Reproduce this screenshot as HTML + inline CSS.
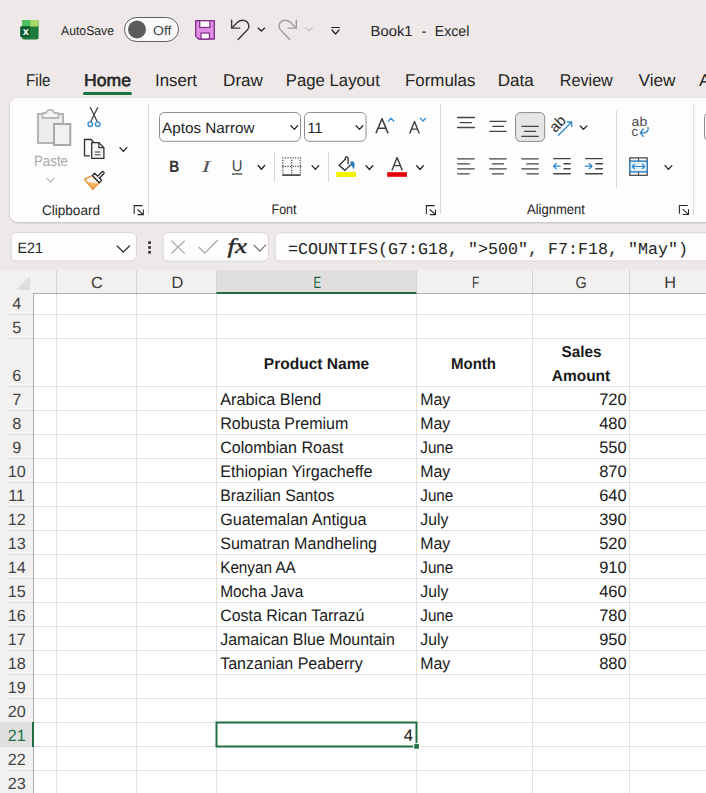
<!DOCTYPE html><html><head><meta charset="utf-8"><style>html,body{margin:0;padding:0;width:706px;height:793px;overflow:hidden;background:#eee9e8}svg{display:block}</style></head><body><svg width="706" height="793" viewBox="0 0 706 793" text-rendering="geometricPrecision"><rect x="0" y="0" width="706" height="793" rx="0" fill="#eee9e8" stroke="none" stroke-width="1"/>
<g>
<rect x="22" y="20" width="16.6" height="19.6" rx="2" fill="#1d7a3a" stroke="none" stroke-width="1"/>
<path d="M24 20 H30.2 V26.6 H22 V22 A2 2 0 0 1 24 20Z" fill="#4cc162"/>
<path d="M30.2 20 H36.6 A2 2 0 0 1 38.6 22 V26.6 H30.2Z" fill="#a6db6b"/>
<rect x="20.2" y="26.2" width="9.6" height="11" rx="1.2" fill="#0f5a2c" stroke="none" stroke-width="1"/>
<text x="25.9" y="35.3" font-family="Liberation Sans" font-size="11" fill="#ffffff" font-weight="700" font-style="normal" text-anchor="middle">x</text>
</g>
<text x="61" y="35.4" font-family="Liberation Sans" font-size="12.8" fill="#242424" font-weight="400" font-style="normal" text-anchor="start" textLength="53" lengthAdjust="spacingAndGlyphs">AutoSave</text>
<rect x="124.5" y="17.5" width="54" height="24" rx="12" fill="#fbfafa" stroke="#5f5f5f" stroke-width="1"/>
<circle cx="137" cy="29.5" r="9" fill="#5c5c5c"/>
<text x="153" y="35" font-family="Liberation Sans" font-size="13" fill="#424242" font-weight="400" font-style="normal" text-anchor="start" textLength="18.5" lengthAdjust="spacingAndGlyphs">Off</text>
<path d="M195.7 20.7 H214.3 V39 H198.6 L195.7 36.1 Z" fill="#e08fe4" stroke="#7f2a88" stroke-width="1.3" stroke-linejoin="round"/>
<rect x="199.7" y="20.7" width="10.2" height="6.8" rx="0" fill="#fdf6fd" stroke="#7f2a88" stroke-width="1.2"/>
<rect x="201" y="33" width="8.4" height="6" rx="0" fill="#fdf6fd" stroke="#7f2a88" stroke-width="1.2"/>
<path d="M231.6 20.2 V28.1 H239.7" fill="none" stroke="#383838" stroke-width="1.4" stroke-linecap="round" stroke-linejoin="round"/>
<path d="M231.9 27.9 L237.3 22.5 C240.3 19.5 245.5 19.5 247.6 22.5 C249.2 24.8 249 28.2 246.8 30.6 L238.1 39.4" fill="none" stroke="#383838" stroke-width="1.4" stroke-linecap="round" stroke-linejoin="round"/>
<path d="M258.09999999999997 28.1 L261.4 31.1 L264.7 28.1" fill="none" stroke="#242424" stroke-width="1.3" stroke-linecap="round" stroke-linejoin="round"/>
<path d="M296.30 20.20 V28.10 H288.20" fill="none" stroke="#9c9c9c" stroke-width="1.4" stroke-linecap="round" stroke-linejoin="round"/>
<path d="M296.00 27.90 L290.60 22.50 C287.60 19.50 282.40 19.50 280.30 22.50 C278.70 24.80 278.90 28.20 281.10 30.60 L289.80 39.40" fill="none" stroke="#9c9c9c" stroke-width="1.4" stroke-linecap="round" stroke-linejoin="round"/>
<path d="M305.7 27.9 L309 30.9 L312.3 27.9" fill="none" stroke="#b8b8b8" stroke-width="1.1" stroke-linecap="round" stroke-linejoin="round"/>
<line x1="331.2" y1="27.5" x2="339.8" y2="27.5" stroke="#242424" stroke-width="1"/>
<path d="M332.0 30.0 L335.5 34.0 L339.0 30.0" fill="none" stroke="#242424" stroke-width="1.3" stroke-linecap="round" stroke-linejoin="round"/>
<text x="370.6" y="35.7" font-family="Liberation Sans" font-size="14.6" fill="#242424" font-weight="400" font-style="normal" text-anchor="start" textLength="42" lengthAdjust="spacingAndGlyphs">Book1</text>
<text x="421.5" y="35.7" font-family="Liberation Sans" font-size="14.6" fill="#242424" font-weight="400" font-style="normal" text-anchor="start" textLength="5" lengthAdjust="spacingAndGlyphs">-</text>
<text x="434.8" y="35.7" font-family="Liberation Sans" font-size="14.6" fill="#242424" font-weight="400" font-style="normal" text-anchor="start" textLength="34.5" lengthAdjust="spacingAndGlyphs">Excel</text>
<text x="26" y="85.8" font-family="Liberation Sans" font-size="17" fill="#242424" font-weight="400" font-style="normal" text-anchor="start" textLength="24.5" lengthAdjust="spacingAndGlyphs">File</text>
<text x="84" y="85.8" font-family="Liberation Sans" font-size="17" fill="#242424" font-weight="400" font-style="normal" text-anchor="start" textLength="47" lengthAdjust="spacingAndGlyphs" stroke="#242424" stroke-width="0.55">Home</text>
<text x="155" y="85.8" font-family="Liberation Sans" font-size="17" fill="#242424" font-weight="400" font-style="normal" text-anchor="start" textLength="42" lengthAdjust="spacingAndGlyphs">Insert</text>
<text x="223" y="85.8" font-family="Liberation Sans" font-size="17" fill="#242424" font-weight="400" font-style="normal" text-anchor="start" textLength="40" lengthAdjust="spacingAndGlyphs">Draw</text>
<text x="285.8" y="85.8" font-family="Liberation Sans" font-size="17" fill="#242424" font-weight="400" font-style="normal" text-anchor="start" textLength="94" lengthAdjust="spacingAndGlyphs">Page Layout</text>
<text x="405" y="85.8" font-family="Liberation Sans" font-size="17" fill="#242424" font-weight="400" font-style="normal" text-anchor="start" textLength="70.5" lengthAdjust="spacingAndGlyphs">Formulas</text>
<text x="497.8" y="85.8" font-family="Liberation Sans" font-size="17" fill="#242424" font-weight="400" font-style="normal" text-anchor="start" textLength="36" lengthAdjust="spacingAndGlyphs">Data</text>
<text x="559.8" y="85.8" font-family="Liberation Sans" font-size="17" fill="#242424" font-weight="400" font-style="normal" text-anchor="start" textLength="53" lengthAdjust="spacingAndGlyphs">Review</text>
<text x="638.5" y="85.8" font-family="Liberation Sans" font-size="17" fill="#242424" font-weight="400" font-style="normal" text-anchor="start" textLength="37" lengthAdjust="spacingAndGlyphs">View</text>
<text x="699" y="85.8" font-family="Liberation Sans" font-size="17" fill="#242424" font-weight="400" font-style="normal" text-anchor="start" textLength="12" lengthAdjust="spacingAndGlyphs">A</text>
<rect x="83" y="92" width="49" height="3" rx="1.5" fill="#1b7343" stroke="none" stroke-width="1"/>
<filter id="sh" x="-5%" y="-20%" width="110%" height="140%"><feDropShadow dx="0" dy="0.8" stdDeviation="1" flood-color="#000" flood-opacity="0.22"/></filter>
<rect x="10" y="98" width="720" height="124" rx="8" fill="#fdfdfd" stroke="none" stroke-width="1" filter="url(#sh)"/>
<path d="M38 114 H63 V143 H38 Z" fill="#ededed" stroke="#b4b4b4" stroke-width="2"/>
<path d="M42.5 113 H46.2 A4.1 4.1 0 0 1 54.2 113 H58.5 V118 H42.5 Z" fill="#f4f4f4" stroke="#b8b8b8" stroke-width="1.8" stroke-linejoin="round"/>
<path d="M54 124 H70.3 V145 H54 Z" fill="#f1f1f1" stroke="#a8a8a8" stroke-width="2"/>
<text x="34" y="166" font-family="Liberation Sans" font-size="15" fill="#a8a8a8" font-weight="400" font-style="normal" text-anchor="start" textLength="34" lengthAdjust="spacingAndGlyphs">Paste</text>
<path d="M46.75 178.1 L50.5 181.9 L54.25 178.1" fill="none" stroke="#b0b0b0" stroke-width="1.1" stroke-linecap="round" stroke-linejoin="round"/>
<path d="M90.3 107.6 L97.2 121.6 M97.7 107.6 L90.8 121.6" fill="none" stroke="#3a3a3a" stroke-width="1.2" stroke-linecap="round"/>
<circle cx="90.3" cy="124.2" r="2.3" fill="#fff" stroke="#3a8fd6" stroke-width="1.4"/>
<circle cx="97.7" cy="124.2" r="2.3" fill="#fff" stroke="#3a8fd6" stroke-width="1.4"/>
<path d="M89.8 155.8 H84.5 V139.5 H91 L93.5 142" fill="#fafafa" stroke="#2e2e2e" stroke-width="1.3" stroke-linejoin="round"/>
<path d="M91.7 142.6 H98.9 L103.9 147.6 V158.4 H91.7 Z" fill="#f7f7f7" stroke="#2e2e2e" stroke-width="1.3" stroke-linejoin="round"/>
<path d="M98.9 142.6 V147.6 H103.9" fill="none" stroke="#2e2e2e" stroke-width="1.2"/>
<line x1="94.8" y1="152" x2="100.5" y2="152" stroke="#555" stroke-width="1.2"/>
<line x1="94.8" y1="154.8" x2="100.5" y2="154.8" stroke="#555" stroke-width="1.2"/>
<path d="M120.0 147.6 L123.4 151.4 L126.80000000000001 147.6" fill="none" stroke="#242424" stroke-width="1.3" stroke-linecap="round" stroke-linejoin="round"/>
<path d="M84.6 179.4 C87.5 177.6 90 176.5 92.4 175.5 L99.3 182.7 L92.6 189.2 Z" fill="#fff7ec" stroke="#e3861c" stroke-width="1.3" stroke-linejoin="round"/>
<path d="M87.2 182 L92.5 188.2 L98.3 183.8 Z" fill="#f6b35a"/>
<path d="M92.4 175.5 L94.6 173.3 L101.6 180.3 L99.3 182.7 Z" fill="#fff" stroke="#262626" stroke-width="1.3" stroke-linejoin="round"/>
<path d="M97.5 176.4 L102.1 171.7 A1.3 1.3 0 0 1 103.9 173.5 L99.3 178.2" fill="#fff" stroke="#262626" stroke-width="1.3" stroke-linejoin="round"/>
<text x="42" y="214.7" font-family="Liberation Sans" font-size="14" fill="#242424" font-weight="400" font-style="normal" text-anchor="start" textLength="58" lengthAdjust="spacingAndGlyphs">Clipboard</text>
<path d="M134.2 213.9 V205.6 H142.5" fill="none" stroke="#242424" stroke-width="1.05"/>
<path d="M137.6 209.5 L143.29999999999998 214.6 M143.29999999999998 209.5 V214.6 H137.6" fill="none" stroke="#242424" stroke-width="1.05"/>
<line x1="148.5" y1="104" x2="148.5" y2="214" stroke="#d6d6d6" stroke-width="1"/>
<rect x="159.5" y="112.5" width="141" height="28.8" rx="5" fill="#ffffff" stroke="#8d8d8d" stroke-width="1"/>
<text x="162" y="133.4" font-family="Liberation Sans" font-size="15" fill="#242424" font-weight="400" font-style="normal" text-anchor="start" textLength="92.5" lengthAdjust="spacingAndGlyphs">Aptos Narrow</text>
<path d="M291.0 125.8 L294.3 129.4 L297.6 125.8" fill="none" stroke="#242424" stroke-width="1.3" stroke-linecap="round" stroke-linejoin="round"/>
<rect x="304.5" y="112.5" width="61.5" height="28.8" rx="5" fill="#ffffff" stroke="#8d8d8d" stroke-width="1"/>
<text x="307.5" y="133.4" font-family="Liberation Sans" font-size="15" fill="#242424" font-weight="400" font-style="normal" text-anchor="start" textLength="15" lengthAdjust="spacingAndGlyphs">11</text>
<path d="M356.2 125.8 L359.5 129.4 L362.8 125.8" fill="none" stroke="#242424" stroke-width="1.3" stroke-linecap="round" stroke-linejoin="round"/>
<path d="M375.9 133.4 L382 118.6 L388.1 133.4 M378.1 128.2 H385.9" fill="none" stroke="#3c3c3c" stroke-width="1.45" stroke-linejoin="round"/>
<path d="M388.3 121 L391 118.2 L393.7 121" fill="none" stroke="#3a8fd6" stroke-width="1.3" stroke-linecap="round" stroke-linejoin="round"/>
<path d="M409.7 133.4 L414.5 121.4 L419.3 133.4 M411.5 129.1 H417.5" fill="none" stroke="#3c3c3c" stroke-width="1.4" stroke-linejoin="round"/>
<path d="M420.3 118.2 L423 121 L425.7 118.2" fill="none" stroke="#3a8fd6" stroke-width="1.3" stroke-linecap="round" stroke-linejoin="round"/>
<text x="169.2" y="171.8" font-family="Liberation Sans" font-size="16.3" fill="#333" font-weight="700" font-style="normal" text-anchor="start" textLength="10" lengthAdjust="spacingAndGlyphs">B</text>
<text x="201.8" y="171.8" font-family="Liberation Serif" font-size="16.3" fill="#555" font-weight="400" font-style="italic" text-anchor="start" textLength="8.5" lengthAdjust="spacingAndGlyphs">I</text>
<text x="231.8" y="171" font-family="Liberation Sans" font-size="15.5" fill="#444" font-weight="400" font-style="normal" text-anchor="start" textLength="10.7" lengthAdjust="spacingAndGlyphs">U</text>
<line x1="232" y1="174" x2="242.3" y2="174" stroke="#444" stroke-width="1.3"/>
<path d="M258.09999999999997 165.5 L261.4 169.3 L264.7 165.5" fill="none" stroke="#242424" stroke-width="1.3" stroke-linecap="round" stroke-linejoin="round"/>
<line x1="274.5" y1="152" x2="274.5" y2="182" stroke="#d6d6d6" stroke-width="1"/>
<rect x="282.3" y="157.3" width="1.15" height="1.15" rx="0" fill="#333333" stroke="none" stroke-width="1"/>
<rect x="282.3" y="165.8" width="1.15" height="1.15" rx="0" fill="#333333" stroke="none" stroke-width="1"/>
<rect x="284.85" y="157.3" width="1.15" height="1.15" rx="0" fill="#333333" stroke="none" stroke-width="1"/>
<rect x="284.85" y="165.8" width="1.15" height="1.15" rx="0" fill="#333333" stroke="none" stroke-width="1"/>
<rect x="287.40000000000003" y="157.3" width="1.15" height="1.15" rx="0" fill="#333333" stroke="none" stroke-width="1"/>
<rect x="287.40000000000003" y="165.8" width="1.15" height="1.15" rx="0" fill="#333333" stroke="none" stroke-width="1"/>
<rect x="289.95" y="157.3" width="1.15" height="1.15" rx="0" fill="#333333" stroke="none" stroke-width="1"/>
<rect x="289.95" y="165.8" width="1.15" height="1.15" rx="0" fill="#333333" stroke="none" stroke-width="1"/>
<rect x="292.5" y="157.3" width="1.15" height="1.15" rx="0" fill="#333333" stroke="none" stroke-width="1"/>
<rect x="292.5" y="165.8" width="1.15" height="1.15" rx="0" fill="#333333" stroke="none" stroke-width="1"/>
<rect x="295.05" y="157.3" width="1.15" height="1.15" rx="0" fill="#333333" stroke="none" stroke-width="1"/>
<rect x="295.05" y="165.8" width="1.15" height="1.15" rx="0" fill="#333333" stroke="none" stroke-width="1"/>
<rect x="297.6" y="157.3" width="1.15" height="1.15" rx="0" fill="#333333" stroke="none" stroke-width="1"/>
<rect x="297.6" y="165.8" width="1.15" height="1.15" rx="0" fill="#333333" stroke="none" stroke-width="1"/>
<rect x="300.15000000000003" y="157.3" width="1.15" height="1.15" rx="0" fill="#333333" stroke="none" stroke-width="1"/>
<rect x="300.15000000000003" y="165.8" width="1.15" height="1.15" rx="0" fill="#333333" stroke="none" stroke-width="1"/>
<rect x="282.3" y="159.8" width="1.15" height="1.15" rx="0" fill="#333333" stroke="none" stroke-width="1"/>
<rect x="291.2" y="159.8" width="1.15" height="1.15" rx="0" fill="#333333" stroke="none" stroke-width="1"/>
<rect x="299.6" y="159.8" width="1.15" height="1.15" rx="0" fill="#333333" stroke="none" stroke-width="1"/>
<rect x="282.3" y="162.3" width="1.15" height="1.15" rx="0" fill="#333333" stroke="none" stroke-width="1"/>
<rect x="291.2" y="162.3" width="1.15" height="1.15" rx="0" fill="#333333" stroke="none" stroke-width="1"/>
<rect x="299.6" y="162.3" width="1.15" height="1.15" rx="0" fill="#333333" stroke="none" stroke-width="1"/>
<rect x="282.3" y="164.8" width="1.15" height="1.15" rx="0" fill="#333333" stroke="none" stroke-width="1"/>
<rect x="291.2" y="164.8" width="1.15" height="1.15" rx="0" fill="#333333" stroke="none" stroke-width="1"/>
<rect x="299.6" y="164.8" width="1.15" height="1.15" rx="0" fill="#333333" stroke="none" stroke-width="1"/>
<rect x="282.3" y="167.3" width="1.15" height="1.15" rx="0" fill="#333333" stroke="none" stroke-width="1"/>
<rect x="291.2" y="167.3" width="1.15" height="1.15" rx="0" fill="#333333" stroke="none" stroke-width="1"/>
<rect x="299.6" y="167.3" width="1.15" height="1.15" rx="0" fill="#333333" stroke="none" stroke-width="1"/>
<rect x="282.3" y="169.8" width="1.15" height="1.15" rx="0" fill="#333333" stroke="none" stroke-width="1"/>
<rect x="291.2" y="169.8" width="1.15" height="1.15" rx="0" fill="#333333" stroke="none" stroke-width="1"/>
<rect x="299.6" y="169.8" width="1.15" height="1.15" rx="0" fill="#333333" stroke="none" stroke-width="1"/>
<rect x="282.3" y="172.3" width="1.15" height="1.15" rx="0" fill="#333333" stroke="none" stroke-width="1"/>
<rect x="291.2" y="172.3" width="1.15" height="1.15" rx="0" fill="#333333" stroke="none" stroke-width="1"/>
<rect x="299.6" y="172.3" width="1.15" height="1.15" rx="0" fill="#333333" stroke="none" stroke-width="1"/>
<rect x="282.2" y="174.3" width="18.5" height="1.6" rx="0" fill="#3a3a3a" stroke="none" stroke-width="1"/>
<path d="M312.09999999999997 165.6 L315.4 169.4 L318.7 165.6" fill="none" stroke="#242424" stroke-width="1.3" stroke-linecap="round" stroke-linejoin="round"/>
<line x1="328.5" y1="152" x2="328.5" y2="182" stroke="#d6d6d6" stroke-width="1"/>
<path d="M350.8 164.6 L344.9 170.4 L339.2 165.2 L345.2 159.4" fill="#fff" stroke="#262626" stroke-width="1.3" stroke-linejoin="round"/>
<path d="M345.2 159.6 V158.4 C345.2 156.4 348.1 156.4 348.1 158.4 V163.8" fill="none" stroke="#262626" stroke-width="1.3" stroke-linecap="round"/>
<path d="M350.3 162.6 C351.3 160.7 354.1 160.8 354.5 163.6 C354.8 165.6 354.3 168 353.6 169.4 C353 167.6 351.9 166 350.9 165 Z" fill="#2a7bbf"/>
<rect x="336.2" y="171.9" width="19.8" height="5.1" rx="0" fill="#f5f200" stroke="none" stroke-width="1"/>
<path d="M366.09999999999997 165.7 L369.4 169.5 L372.7 165.7" fill="none" stroke="#242424" stroke-width="1.3" stroke-linecap="round" stroke-linejoin="round"/>
<path d="M391.9 170.6 L397.1 157.6 L402.3 170.6 M393.9 165.6 H400.3" fill="none" stroke="#3a3a3a" stroke-width="1.4" stroke-linejoin="round"/>
<rect x="387.2" y="172.2" width="19.8" height="4.6" rx="0" fill="#e5000b" stroke="none" stroke-width="1"/>
<path d="M416.7 165.7 L420 169.5 L423.3 165.7" fill="none" stroke="#242424" stroke-width="1.3" stroke-linecap="round" stroke-linejoin="round"/>
<text x="271.5" y="214" font-family="Liberation Sans" font-size="14" fill="#242424" font-weight="400" font-style="normal" text-anchor="start" textLength="25" lengthAdjust="spacingAndGlyphs">Font</text>
<path d="M426.4 213.9 V205.6 H434.7" fill="none" stroke="#242424" stroke-width="1.05"/>
<path d="M429.79999999999995 209.5 L435.5 214.6 M435.5 209.5 V214.6 H429.79999999999995" fill="none" stroke="#242424" stroke-width="1.05"/>
<line x1="440.5" y1="104" x2="440.5" y2="214" stroke="#d6d6d6" stroke-width="1"/>
<line x1="457.6" y1="117.5" x2="474.4" y2="117.5" stroke="#444" stroke-width="1.35" stroke-linecap="round"/>
<line x1="460.3" y1="122.6" x2="471.4" y2="122.6" stroke="#444" stroke-width="1.35" stroke-linecap="round"/>
<line x1="457.6" y1="127.5" x2="474.4" y2="127.5" stroke="#444" stroke-width="1.35" stroke-linecap="round"/>
<line x1="489.90000000000003" y1="121.3" x2="506.09999999999997" y2="121.3" stroke="#444" stroke-width="1.35" stroke-linecap="round"/>
<line x1="492.8" y1="126.3" x2="503.5" y2="126.3" stroke="#444" stroke-width="1.35" stroke-linecap="round"/>
<line x1="489.90000000000003" y1="131.3" x2="506.09999999999997" y2="131.3" stroke="#444" stroke-width="1.35" stroke-linecap="round"/>
<rect x="515.5" y="112.6" width="29.2" height="28.8" rx="5" fill="#e6e6e6" stroke="#8a8a8a" stroke-width="1"/>
<line x1="521.8000000000001" y1="126.3" x2="538.3" y2="126.3" stroke="#444" stroke-width="1.35" stroke-linecap="round"/>
<line x1="524.5" y1="131.3" x2="535.5" y2="131.3" stroke="#444" stroke-width="1.35" stroke-linecap="round"/>
<line x1="521.8000000000001" y1="136.3" x2="538.3" y2="136.3" stroke="#444" stroke-width="1.35" stroke-linecap="round"/>
<g transform="translate(558.5,124) rotate(-45)">
<text x="-0.5" y="4.2" font-family="Liberation Sans" font-size="15" fill="#2a2a2a" font-weight="400" font-style="normal" text-anchor="middle" textLength="16.5" lengthAdjust="spacingAndGlyphs">ab</text>
</g>
<path d="M558.4 135.3 L571.7 122 M567.4 122 H571.7 V126.4" fill="none" stroke="#2f86c9" stroke-width="1.3" stroke-linecap="round" stroke-linejoin="round"/>
<path d="M580.1 125.89999999999999 L583.5 129.29999999999998 L586.9 125.89999999999999" fill="none" stroke="#242424" stroke-width="1.3" stroke-linecap="round" stroke-linejoin="round"/>
<line x1="457.70000000000005" y1="158.8" x2="474.2" y2="158.8" stroke="#444" stroke-width="1.35" stroke-linecap="round"/>
<line x1="457.70000000000005" y1="163.9" x2="469.2" y2="163.9" stroke="#444" stroke-width="1.35" stroke-linecap="round"/>
<line x1="457.70000000000005" y1="168.8" x2="474.2" y2="168.8" stroke="#444" stroke-width="1.35" stroke-linecap="round"/>
<line x1="457.70000000000005" y1="173.8" x2="469.2" y2="173.8" stroke="#444" stroke-width="1.35" stroke-linecap="round"/>
<line x1="489.70000000000005" y1="158.8" x2="506.2" y2="158.8" stroke="#444" stroke-width="1.35" stroke-linecap="round"/>
<line x1="492.40000000000003" y1="163.9" x2="503.4" y2="163.9" stroke="#444" stroke-width="1.35" stroke-linecap="round"/>
<line x1="489.70000000000005" y1="168.8" x2="506.2" y2="168.8" stroke="#444" stroke-width="1.35" stroke-linecap="round"/>
<line x1="492.40000000000003" y1="173.8" x2="503.4" y2="173.8" stroke="#444" stroke-width="1.35" stroke-linecap="round"/>
<line x1="521.8000000000001" y1="158.8" x2="538.3" y2="158.8" stroke="#444" stroke-width="1.35" stroke-linecap="round"/>
<line x1="526.8000000000001" y1="163.9" x2="538.3" y2="163.9" stroke="#444" stroke-width="1.35" stroke-linecap="round"/>
<line x1="521.8000000000001" y1="168.8" x2="538.3" y2="168.8" stroke="#444" stroke-width="1.35" stroke-linecap="round"/>
<line x1="526.8000000000001" y1="173.8" x2="538.3" y2="173.8" stroke="#444" stroke-width="1.35" stroke-linecap="round"/>
<line x1="553.7" y1="158.6" x2="570.1999999999999" y2="158.6" stroke="#444" stroke-width="1.35" stroke-linecap="round"/>
<line x1="564.0" y1="163.7" x2="570.1999999999999" y2="163.7" stroke="#444" stroke-width="1.35" stroke-linecap="round"/>
<line x1="564.0" y1="168.7" x2="570.1999999999999" y2="168.7" stroke="#444" stroke-width="1.35" stroke-linecap="round"/>
<line x1="553.7" y1="173.7" x2="570.1999999999999" y2="173.7" stroke="#444" stroke-width="1.35" stroke-linecap="round"/>
<path d="M560.2 166.2 H553.6 M556.3 163.5 L553.5 166.2 L556.3 168.9" fill="none" stroke="#2f86c9" stroke-width="1.3" stroke-linecap="round" stroke-linejoin="round"/>
<line x1="585.6" y1="158.6" x2="602.4" y2="158.6" stroke="#444" stroke-width="1.35" stroke-linecap="round"/>
<line x1="595.8000000000001" y1="163.7" x2="602.4" y2="163.7" stroke="#444" stroke-width="1.35" stroke-linecap="round"/>
<line x1="595.8000000000001" y1="168.7" x2="602.4" y2="168.7" stroke="#444" stroke-width="1.35" stroke-linecap="round"/>
<line x1="585.6" y1="173.7" x2="602.4" y2="173.7" stroke="#444" stroke-width="1.35" stroke-linecap="round"/>
<path d="M585.3 166.2 H591.9 M589.2 163.5 L592 166.2 L589.2 168.9" fill="none" stroke="#2f86c9" stroke-width="1.3" stroke-linecap="round" stroke-linejoin="round"/>
<line x1="616.5" y1="110.5" x2="616.5" y2="188" stroke="#d6d6d6" stroke-width="1"/>
<text x="631.6" y="126.4" font-family="Liberation Sans" font-size="13" fill="#4a4a4a" font-weight="400" font-style="normal" text-anchor="start" textLength="15.6" lengthAdjust="spacingAndGlyphs">ab</text>
<text x="631.6" y="135.7" font-family="Liberation Sans" font-size="13.3" fill="#4a4a4a" font-weight="400" font-style="normal" text-anchor="start" textLength="6.6" lengthAdjust="spacingAndGlyphs">c</text>
<path d="M648 127.4 C648.8 131 646.6 132.8 643 132.8 H640.5 M643.4 129 L640.2 132.8 L643.4 136.4" fill="none" stroke="#2f86c9" stroke-width="1.3" stroke-linecap="round" stroke-linejoin="round"/>
<rect x="629.8" y="157.9" width="17.4" height="17.4" rx="0" fill="#fff" stroke="#4a4a4a" stroke-width="1.3"/>
<rect x="629.8" y="161.1" width="17.4" height="10.8" rx="0" fill="#e3f1fb" stroke="#2b7bbd" stroke-width="1.4"/>
<line x1="638.5" y1="157.9" x2="638.5" y2="161.1" stroke="#4a4a4a" stroke-width="1.1"/>
<line x1="638.5" y1="171.9" x2="638.5" y2="175.3" stroke="#4a4a4a" stroke-width="1.1"/>
<path d="M632.3 166.5 H644.7 M634.6 164.3 L632.3 166.5 L634.6 168.7 M642.4 164.3 L644.7 166.5 L642.4 168.7" fill="none" stroke="#2f86c9" stroke-width="1.2" stroke-linecap="round" stroke-linejoin="round"/>
<path d="M665.0 165.6 L668.4 169.4 L671.8 165.6" fill="none" stroke="#242424" stroke-width="1.3" stroke-linecap="round" stroke-linejoin="round"/>
<text x="527" y="214.2" font-family="Liberation Sans" font-size="14" fill="#242424" font-weight="400" font-style="normal" text-anchor="start" textLength="58" lengthAdjust="spacingAndGlyphs">Alignment</text>
<path d="M679.4 213.70000000000002 V205.4 H687.6999999999999" fill="none" stroke="#242424" stroke-width="1.05"/>
<path d="M682.8 209.3 L688.5 214.4 M688.5 209.3 V214.4 H682.8" fill="none" stroke="#242424" stroke-width="1.05"/>
<line x1="693.7" y1="104" x2="693.7" y2="215" stroke="#d6d6d6" stroke-width="1"/>
<rect x="704.5" y="113.2" width="40" height="27" rx="4" fill="#fff" stroke="#8a8a8a" stroke-width="1"/>
<rect x="11" y="232.6" width="125.4" height="28.4" rx="5" fill="#fdfdfd" stroke="#d9d5d3" stroke-width="1"/>
<text x="17.5" y="252.8" font-family="Liberation Sans" font-size="15" fill="#242424" font-weight="400" font-style="normal" text-anchor="start" textLength="25.5" lengthAdjust="spacingAndGlyphs">E21</text>
<path d="M117.14999999999999 246.0 L123.3 252.0 L129.45 246.0" fill="none" stroke="#333333" stroke-width="1.25" stroke-linecap="round" stroke-linejoin="round"/>
<rect x="148.2" y="241.3" width="2.7" height="2.7" rx="0" fill="#333333" stroke="none" stroke-width="1"/>
<rect x="148.2" y="246.1" width="2.7" height="2.7" rx="0" fill="#333333" stroke="none" stroke-width="1"/>
<rect x="148.2" y="250.9" width="2.7" height="2.7" rx="0" fill="#333333" stroke="none" stroke-width="1"/>
<rect x="163" y="232.6" width="105.3" height="28.6" rx="5" fill="#fdfdfd" stroke="#d9d5d3" stroke-width="1"/>
<path d="M171.2 240.6 L184.8 253.6 M184.8 240.6 L171.2 253.6" stroke="#a6a6a6" stroke-width="1.3" fill="none"/>
<path d="M198.6 247 L204.8 253.2 L217.6 240.2" stroke="#a6a6a6" stroke-width="1.3" fill="none"/>
<text x="227.6" y="253" font-family="Liberation Serif" font-size="21" fill="#262626" font-weight="400" font-style="italic" text-anchor="start" textLength="19.5" lengthAdjust="spacingAndGlyphs" stroke="#262626" stroke-width="0.35">fx</text>
<path d="M254.10000000000002 245.2 L259.8 251.2 L265.5 245.2" fill="none" stroke="#6a6a6a" stroke-width="1.1" stroke-linecap="round" stroke-linejoin="round"/>
<rect x="275" y="232.8" width="460" height="28.2" rx="5" fill="#fdfdfd" stroke="#d9d5d3" stroke-width="1"/>
<text x="288" y="253.5" font-family="Liberation Mono" font-size="16.6" fill="#242424" font-weight="400" font-style="normal" text-anchor="start" textLength="400" lengthAdjust="spacingAndGlyphs">=COUNTIFS(G7:G18, &quot;&gt;500&quot;, F7:F18, &quot;May&quot;)</text>
<rect x="0" y="270" width="706" height="24" rx="0" fill="#f2f1f0" stroke="none" stroke-width="1"/>
<rect x="0" y="294" width="34" height="499" rx="0" fill="#f2f1f0" stroke="none" stroke-width="1"/>
<rect x="34" y="294" width="672" height="499" rx="0" fill="#ffffff" stroke="none" stroke-width="1"/>
<rect x="216.5" y="270" width="200" height="23.5" rx="0" fill="#e0dfde" stroke="none" stroke-width="1"/>
<rect x="0" y="722" width="33" height="25" rx="0" fill="#e0dfde" stroke="none" stroke-width="1"/>
<path d="M16 290 L30 276 V290 Z" fill="#dfdedd"/>
<line x1="56.5" y1="270" x2="56.5" y2="293" stroke="#d5d4d3" stroke-width="1"/>
<line x1="56.5" y1="294" x2="56.5" y2="793" stroke="#e1e1e1" stroke-width="1"/>
<line x1="136.5" y1="270" x2="136.5" y2="293" stroke="#d5d4d3" stroke-width="1"/>
<line x1="136.5" y1="294" x2="136.5" y2="793" stroke="#e1e1e1" stroke-width="1"/>
<line x1="216.5" y1="270" x2="216.5" y2="293" stroke="#d5d4d3" stroke-width="1"/>
<line x1="216.5" y1="294" x2="216.5" y2="793" stroke="#e1e1e1" stroke-width="1"/>
<line x1="416.5" y1="270" x2="416.5" y2="293" stroke="#d5d4d3" stroke-width="1"/>
<line x1="416.5" y1="294" x2="416.5" y2="793" stroke="#e1e1e1" stroke-width="1"/>
<line x1="532.5" y1="270" x2="532.5" y2="293" stroke="#d5d4d3" stroke-width="1"/>
<line x1="532.5" y1="294" x2="532.5" y2="793" stroke="#e1e1e1" stroke-width="1"/>
<line x1="629.5" y1="270" x2="629.5" y2="293" stroke="#d5d4d3" stroke-width="1"/>
<line x1="629.5" y1="294" x2="629.5" y2="793" stroke="#e1e1e1" stroke-width="1"/>
<line x1="34" y1="314.5" x2="706" y2="314.5" stroke="#e1e1e1" stroke-width="1"/>
<line x1="8" y1="314.5" x2="33" y2="314.5" stroke="#dddcdb" stroke-width="1"/>
<line x1="34" y1="338.5" x2="706" y2="338.5" stroke="#e1e1e1" stroke-width="1"/>
<line x1="8" y1="338.5" x2="33" y2="338.5" stroke="#dddcdb" stroke-width="1"/>
<line x1="34" y1="386.5" x2="706" y2="386.5" stroke="#e1e1e1" stroke-width="1"/>
<line x1="8" y1="386.5" x2="33" y2="386.5" stroke="#dddcdb" stroke-width="1"/>
<line x1="34" y1="410.5" x2="706" y2="410.5" stroke="#e1e1e1" stroke-width="1"/>
<line x1="8" y1="410.5" x2="33" y2="410.5" stroke="#dddcdb" stroke-width="1"/>
<line x1="34" y1="434.5" x2="706" y2="434.5" stroke="#e1e1e1" stroke-width="1"/>
<line x1="8" y1="434.5" x2="33" y2="434.5" stroke="#dddcdb" stroke-width="1"/>
<line x1="34" y1="458.5" x2="706" y2="458.5" stroke="#e1e1e1" stroke-width="1"/>
<line x1="8" y1="458.5" x2="33" y2="458.5" stroke="#dddcdb" stroke-width="1"/>
<line x1="34" y1="482.5" x2="706" y2="482.5" stroke="#e1e1e1" stroke-width="1"/>
<line x1="8" y1="482.5" x2="33" y2="482.5" stroke="#dddcdb" stroke-width="1"/>
<line x1="34" y1="506.5" x2="706" y2="506.5" stroke="#e1e1e1" stroke-width="1"/>
<line x1="8" y1="506.5" x2="33" y2="506.5" stroke="#dddcdb" stroke-width="1"/>
<line x1="34" y1="530.5" x2="706" y2="530.5" stroke="#e1e1e1" stroke-width="1"/>
<line x1="8" y1="530.5" x2="33" y2="530.5" stroke="#dddcdb" stroke-width="1"/>
<line x1="34" y1="554.5" x2="706" y2="554.5" stroke="#e1e1e1" stroke-width="1"/>
<line x1="8" y1="554.5" x2="33" y2="554.5" stroke="#dddcdb" stroke-width="1"/>
<line x1="34" y1="578.5" x2="706" y2="578.5" stroke="#e1e1e1" stroke-width="1"/>
<line x1="8" y1="578.5" x2="33" y2="578.5" stroke="#dddcdb" stroke-width="1"/>
<line x1="34" y1="602.5" x2="706" y2="602.5" stroke="#e1e1e1" stroke-width="1"/>
<line x1="8" y1="602.5" x2="33" y2="602.5" stroke="#dddcdb" stroke-width="1"/>
<line x1="34" y1="626.5" x2="706" y2="626.5" stroke="#e1e1e1" stroke-width="1"/>
<line x1="8" y1="626.5" x2="33" y2="626.5" stroke="#dddcdb" stroke-width="1"/>
<line x1="34" y1="650.5" x2="706" y2="650.5" stroke="#e1e1e1" stroke-width="1"/>
<line x1="8" y1="650.5" x2="33" y2="650.5" stroke="#dddcdb" stroke-width="1"/>
<line x1="34" y1="674.5" x2="706" y2="674.5" stroke="#e1e1e1" stroke-width="1"/>
<line x1="8" y1="674.5" x2="33" y2="674.5" stroke="#dddcdb" stroke-width="1"/>
<line x1="34" y1="698.5" x2="706" y2="698.5" stroke="#e1e1e1" stroke-width="1"/>
<line x1="8" y1="698.5" x2="33" y2="698.5" stroke="#dddcdb" stroke-width="1"/>
<line x1="34" y1="722.5" x2="706" y2="722.5" stroke="#e1e1e1" stroke-width="1"/>
<line x1="8" y1="722.5" x2="33" y2="722.5" stroke="#dddcdb" stroke-width="1"/>
<line x1="34" y1="746.5" x2="706" y2="746.5" stroke="#e1e1e1" stroke-width="1"/>
<line x1="8" y1="746.5" x2="33" y2="746.5" stroke="#dddcdb" stroke-width="1"/>
<line x1="34" y1="770.5" x2="706" y2="770.5" stroke="#e1e1e1" stroke-width="1"/>
<line x1="8" y1="770.5" x2="33" y2="770.5" stroke="#dddcdb" stroke-width="1"/>
<line x1="33" y1="293.5" x2="706" y2="293.5" stroke="#b3b2b1" stroke-width="1"/>
<line x1="33.5" y1="293" x2="33.5" y2="793" stroke="#b0afae" stroke-width="1"/>
<rect x="216.5" y="292" width="200" height="2" rx="0" fill="#1e6e42" stroke="none" stroke-width="1"/>
<rect x="32" y="722" width="2" height="25" rx="0" fill="#1e6e42" stroke="none" stroke-width="1"/>
<text x="96.9" y="287.8" font-family="Liberation Sans" font-size="16.3" fill="#3a3a3a" font-weight="400" font-style="normal" text-anchor="middle">C</text>
<text x="177.3" y="287.8" font-family="Liberation Sans" font-size="16.3" fill="#3a3a3a" font-weight="400" font-style="normal" text-anchor="middle">D</text>
<text x="317.2" y="287.8" font-family="Liberation Sans" font-size="16.3" fill="#1b5e3a" font-weight="400" font-style="normal" text-anchor="middle" textLength="7.6" lengthAdjust="spacingAndGlyphs">E</text>
<text x="475.5" y="287.8" font-family="Liberation Sans" font-size="16.3" fill="#3a3a3a" font-weight="400" font-style="normal" text-anchor="middle" textLength="7.2" lengthAdjust="spacingAndGlyphs">F</text>
<text x="581.1" y="287.8" font-family="Liberation Sans" font-size="16.3" fill="#3a3a3a" font-weight="400" font-style="normal" text-anchor="middle" textLength="11.2" lengthAdjust="spacingAndGlyphs">G</text>
<text x="670.1" y="287.8" font-family="Liberation Sans" font-size="16.3" fill="#3a3a3a" font-weight="400" font-style="normal" text-anchor="middle">H</text>
<text x="16.7" y="309" font-family="Liberation Sans" font-size="16.2" fill="#424242" font-weight="400" font-style="normal" text-anchor="middle">4</text>
<text x="16.7" y="333" font-family="Liberation Sans" font-size="16.2" fill="#424242" font-weight="400" font-style="normal" text-anchor="middle">5</text>
<text x="16.7" y="381" font-family="Liberation Sans" font-size="16.2" fill="#424242" font-weight="400" font-style="normal" text-anchor="middle">6</text>
<text x="16.7" y="405" font-family="Liberation Sans" font-size="16.2" fill="#424242" font-weight="400" font-style="normal" text-anchor="middle">7</text>
<text x="16.7" y="429" font-family="Liberation Sans" font-size="16.2" fill="#424242" font-weight="400" font-style="normal" text-anchor="middle">8</text>
<text x="16.7" y="453" font-family="Liberation Sans" font-size="16.2" fill="#424242" font-weight="400" font-style="normal" text-anchor="middle">9</text>
<text x="16.7" y="477" font-family="Liberation Sans" font-size="16.2" fill="#424242" font-weight="400" font-style="normal" text-anchor="middle">10</text>
<text x="16.7" y="501" font-family="Liberation Sans" font-size="16.2" fill="#424242" font-weight="400" font-style="normal" text-anchor="middle">11</text>
<text x="16.7" y="525" font-family="Liberation Sans" font-size="16.2" fill="#424242" font-weight="400" font-style="normal" text-anchor="middle">12</text>
<text x="16.7" y="549" font-family="Liberation Sans" font-size="16.2" fill="#424242" font-weight="400" font-style="normal" text-anchor="middle">13</text>
<text x="16.7" y="573" font-family="Liberation Sans" font-size="16.2" fill="#424242" font-weight="400" font-style="normal" text-anchor="middle">14</text>
<text x="16.7" y="597" font-family="Liberation Sans" font-size="16.2" fill="#424242" font-weight="400" font-style="normal" text-anchor="middle">15</text>
<text x="16.7" y="621" font-family="Liberation Sans" font-size="16.2" fill="#424242" font-weight="400" font-style="normal" text-anchor="middle">16</text>
<text x="16.7" y="645" font-family="Liberation Sans" font-size="16.2" fill="#424242" font-weight="400" font-style="normal" text-anchor="middle">17</text>
<text x="16.7" y="669" font-family="Liberation Sans" font-size="16.2" fill="#424242" font-weight="400" font-style="normal" text-anchor="middle">18</text>
<text x="16.7" y="693" font-family="Liberation Sans" font-size="16.2" fill="#424242" font-weight="400" font-style="normal" text-anchor="middle">19</text>
<text x="16.7" y="717" font-family="Liberation Sans" font-size="16.2" fill="#424242" font-weight="400" font-style="normal" text-anchor="middle">20</text>
<text x="16.7" y="741" font-family="Liberation Sans" font-size="16.2" fill="#1e6e42" font-weight="400" font-style="normal" text-anchor="middle">21</text>
<text x="16.7" y="765" font-family="Liberation Sans" font-size="16.2" fill="#424242" font-weight="400" font-style="normal" text-anchor="middle">22</text>
<text x="16.7" y="789" font-family="Liberation Sans" font-size="16.2" fill="#424242" font-weight="400" font-style="normal" text-anchor="middle">23</text>
<text x="316.5" y="369" font-family="Liberation Sans" font-size="15.8" fill="#1a1a1a" font-weight="700" font-style="normal" text-anchor="middle" textLength="105.5" lengthAdjust="spacingAndGlyphs">Product Name</text>
<text x="473.5" y="369" font-family="Liberation Sans" font-size="15.8" fill="#1a1a1a" font-weight="700" font-style="normal" text-anchor="middle" textLength="45" lengthAdjust="spacingAndGlyphs">Month</text>
<text x="581.5" y="357" font-family="Liberation Sans" font-size="15.8" fill="#1a1a1a" font-weight="700" font-style="normal" text-anchor="middle" textLength="40" lengthAdjust="spacingAndGlyphs">Sales</text>
<text x="581" y="381" font-family="Liberation Sans" font-size="15.8" fill="#1a1a1a" font-weight="700" font-style="normal" text-anchor="middle" textLength="58.5" lengthAdjust="spacingAndGlyphs">Amount</text>
<text x="220.2" y="405" font-family="Liberation Sans" font-size="16.6" fill="#1a1a1a" font-weight="400" font-style="normal" text-anchor="start" textLength="101.2" lengthAdjust="spacingAndGlyphs">Arabica Blend</text>
<text x="420.3" y="405" font-family="Liberation Sans" font-size="16.6" fill="#1a1a1a" font-weight="400" font-style="normal" text-anchor="start" textLength="30" lengthAdjust="spacingAndGlyphs">May</text>
<text x="626.7" y="405" font-family="Liberation Sans" font-size="16.6" fill="#1a1a1a" font-weight="400" font-style="normal" text-anchor="end" textLength="27.5" lengthAdjust="spacingAndGlyphs">720</text>
<text x="220.2" y="429" font-family="Liberation Sans" font-size="16.6" fill="#1a1a1a" font-weight="400" font-style="normal" text-anchor="start" textLength="128.2" lengthAdjust="spacingAndGlyphs">Robusta Premium</text>
<text x="420.3" y="429" font-family="Liberation Sans" font-size="16.6" fill="#1a1a1a" font-weight="400" font-style="normal" text-anchor="start" textLength="30" lengthAdjust="spacingAndGlyphs">May</text>
<text x="626.7" y="429" font-family="Liberation Sans" font-size="16.6" fill="#1a1a1a" font-weight="400" font-style="normal" text-anchor="end" textLength="27.5" lengthAdjust="spacingAndGlyphs">480</text>
<text x="220.2" y="453" font-family="Liberation Sans" font-size="16.6" fill="#1a1a1a" font-weight="400" font-style="normal" text-anchor="start" textLength="123.2" lengthAdjust="spacingAndGlyphs">Colombian Roast</text>
<text x="420.3" y="453" font-family="Liberation Sans" font-size="16.6" fill="#1a1a1a" font-weight="400" font-style="normal" text-anchor="start" textLength="33" lengthAdjust="spacingAndGlyphs">June</text>
<text x="626.7" y="453" font-family="Liberation Sans" font-size="16.6" fill="#1a1a1a" font-weight="400" font-style="normal" text-anchor="end" textLength="27.5" lengthAdjust="spacingAndGlyphs">550</text>
<text x="220.2" y="477" font-family="Liberation Sans" font-size="16.6" fill="#1a1a1a" font-weight="400" font-style="normal" text-anchor="start" textLength="152.2" lengthAdjust="spacingAndGlyphs">Ethiopian Yirgacheffe</text>
<text x="420.3" y="477" font-family="Liberation Sans" font-size="16.6" fill="#1a1a1a" font-weight="400" font-style="normal" text-anchor="start" textLength="30" lengthAdjust="spacingAndGlyphs">May</text>
<text x="626.7" y="477" font-family="Liberation Sans" font-size="16.6" fill="#1a1a1a" font-weight="400" font-style="normal" text-anchor="end" textLength="27.5" lengthAdjust="spacingAndGlyphs">870</text>
<text x="220.2" y="501" font-family="Liberation Sans" font-size="16.6" fill="#1a1a1a" font-weight="400" font-style="normal" text-anchor="start" textLength="114.2" lengthAdjust="spacingAndGlyphs">Brazilian Santos</text>
<text x="420.3" y="501" font-family="Liberation Sans" font-size="16.6" fill="#1a1a1a" font-weight="400" font-style="normal" text-anchor="start" textLength="33" lengthAdjust="spacingAndGlyphs">June</text>
<text x="626.7" y="501" font-family="Liberation Sans" font-size="16.6" fill="#1a1a1a" font-weight="400" font-style="normal" text-anchor="end" textLength="27.5" lengthAdjust="spacingAndGlyphs">640</text>
<text x="220.2" y="525" font-family="Liberation Sans" font-size="16.6" fill="#1a1a1a" font-weight="400" font-style="normal" text-anchor="start" textLength="146.2" lengthAdjust="spacingAndGlyphs">Guatemalan Antigua</text>
<text x="420.3" y="525" font-family="Liberation Sans" font-size="16.6" fill="#1a1a1a" font-weight="400" font-style="normal" text-anchor="start" textLength="28" lengthAdjust="spacingAndGlyphs">July</text>
<text x="626.7" y="525" font-family="Liberation Sans" font-size="16.6" fill="#1a1a1a" font-weight="400" font-style="normal" text-anchor="end" textLength="27.5" lengthAdjust="spacingAndGlyphs">390</text>
<text x="220.2" y="549" font-family="Liberation Sans" font-size="16.6" fill="#1a1a1a" font-weight="400" font-style="normal" text-anchor="start" textLength="156.79999999999998" lengthAdjust="spacingAndGlyphs">Sumatran Mandheling</text>
<text x="420.3" y="549" font-family="Liberation Sans" font-size="16.6" fill="#1a1a1a" font-weight="400" font-style="normal" text-anchor="start" textLength="30" lengthAdjust="spacingAndGlyphs">May</text>
<text x="626.7" y="549" font-family="Liberation Sans" font-size="16.6" fill="#1a1a1a" font-weight="400" font-style="normal" text-anchor="end" textLength="27.5" lengthAdjust="spacingAndGlyphs">520</text>
<text x="220.2" y="573" font-family="Liberation Sans" font-size="16.6" fill="#1a1a1a" font-weight="400" font-style="normal" text-anchor="start" textLength="75.60000000000001" lengthAdjust="spacingAndGlyphs">Kenyan AA</text>
<text x="420.3" y="573" font-family="Liberation Sans" font-size="16.6" fill="#1a1a1a" font-weight="400" font-style="normal" text-anchor="start" textLength="33" lengthAdjust="spacingAndGlyphs">June</text>
<text x="626.7" y="573" font-family="Liberation Sans" font-size="16.6" fill="#1a1a1a" font-weight="400" font-style="normal" text-anchor="end" textLength="27.5" lengthAdjust="spacingAndGlyphs">910</text>
<text x="220.2" y="597" font-family="Liberation Sans" font-size="16.6" fill="#1a1a1a" font-weight="400" font-style="normal" text-anchor="start" textLength="83.2" lengthAdjust="spacingAndGlyphs">Mocha Java</text>
<text x="420.3" y="597" font-family="Liberation Sans" font-size="16.6" fill="#1a1a1a" font-weight="400" font-style="normal" text-anchor="start" textLength="28" lengthAdjust="spacingAndGlyphs">July</text>
<text x="626.7" y="597" font-family="Liberation Sans" font-size="16.6" fill="#1a1a1a" font-weight="400" font-style="normal" text-anchor="end" textLength="27.5" lengthAdjust="spacingAndGlyphs">460</text>
<text x="220.2" y="621" font-family="Liberation Sans" font-size="16.6" fill="#1a1a1a" font-weight="400" font-style="normal" text-anchor="start" textLength="144.2" lengthAdjust="spacingAndGlyphs">Costa Rican Tarrazú</text>
<text x="420.3" y="621" font-family="Liberation Sans" font-size="16.6" fill="#1a1a1a" font-weight="400" font-style="normal" text-anchor="start" textLength="33" lengthAdjust="spacingAndGlyphs">June</text>
<text x="626.7" y="621" font-family="Liberation Sans" font-size="16.6" fill="#1a1a1a" font-weight="400" font-style="normal" text-anchor="end" textLength="27.5" lengthAdjust="spacingAndGlyphs">780</text>
<text x="220.2" y="645" font-family="Liberation Sans" font-size="16.6" fill="#1a1a1a" font-weight="400" font-style="normal" text-anchor="start" textLength="174.6" lengthAdjust="spacingAndGlyphs">Jamaican Blue Mountain</text>
<text x="420.3" y="645" font-family="Liberation Sans" font-size="16.6" fill="#1a1a1a" font-weight="400" font-style="normal" text-anchor="start" textLength="28" lengthAdjust="spacingAndGlyphs">July</text>
<text x="626.7" y="645" font-family="Liberation Sans" font-size="16.6" fill="#1a1a1a" font-weight="400" font-style="normal" text-anchor="end" textLength="27.5" lengthAdjust="spacingAndGlyphs">950</text>
<text x="220.2" y="669" font-family="Liberation Sans" font-size="16.6" fill="#1a1a1a" font-weight="400" font-style="normal" text-anchor="start" textLength="142.5" lengthAdjust="spacingAndGlyphs">Tanzanian Peaberry</text>
<text x="420.3" y="669" font-family="Liberation Sans" font-size="16.6" fill="#1a1a1a" font-weight="400" font-style="normal" text-anchor="start" textLength="30" lengthAdjust="spacingAndGlyphs">May</text>
<text x="626.7" y="669" font-family="Liberation Sans" font-size="16.6" fill="#1a1a1a" font-weight="400" font-style="normal" text-anchor="end" textLength="27.5" lengthAdjust="spacingAndGlyphs">880</text>
<text x="413" y="741.2" font-family="Liberation Sans" font-size="16.6" fill="#1a1a1a" font-weight="400" font-style="normal" text-anchor="end">4</text>
<rect x="216.5" y="722.5" width="200" height="24" rx="0" fill="none" stroke="#1e6e42" stroke-width="2"/>
<rect x="413.8" y="743.6" width="5.6" height="5.6" rx="0" fill="#1e6e42" stroke="#ffffff" stroke-width="1"/></svg></body></html>
